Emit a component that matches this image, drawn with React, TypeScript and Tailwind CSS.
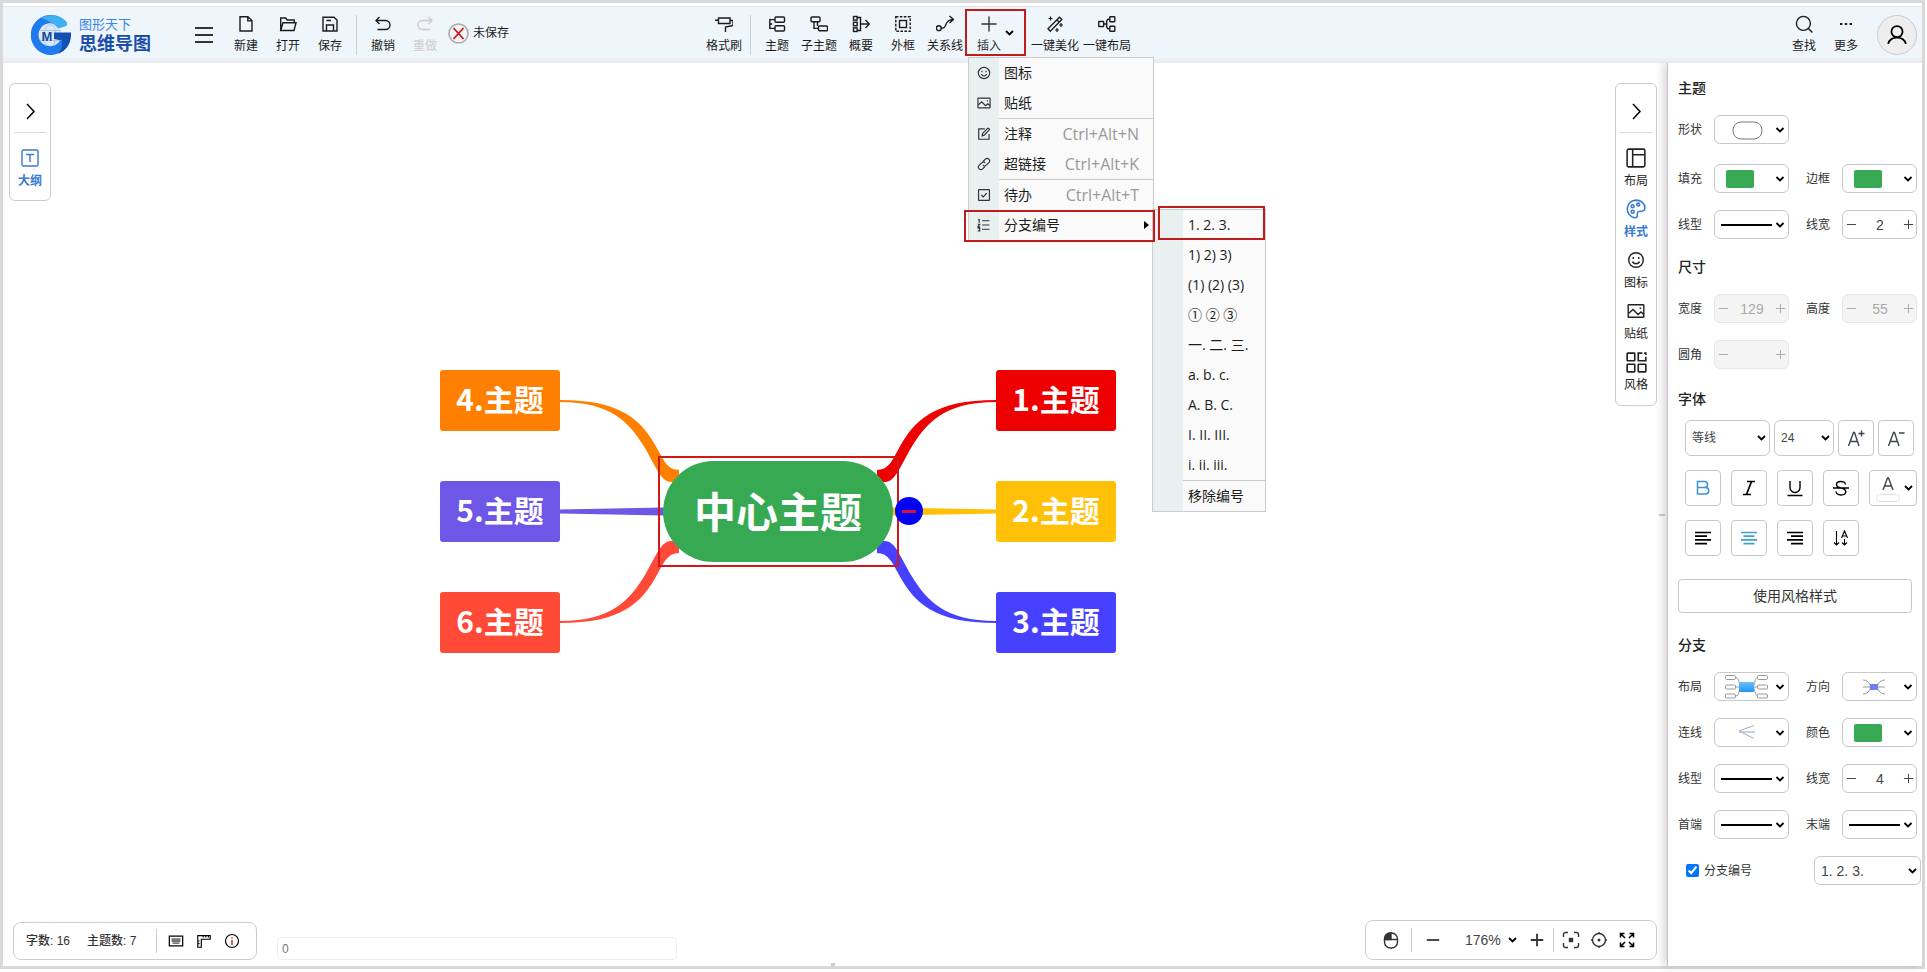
import React, { useState } from 'react';

interface IconProps {
  children: React.ReactNode;
  size?: number;
  stroke?: number;
}

function Icon({ children, size = 18, stroke = 1.4 }: IconProps) {
  return (
    <svg
      width={size}
      height={size}
      viewBox="0 0 18 18"
      fill="none"
      stroke="currentColor"
      strokeWidth={stroke}
      aria-hidden="true"
      className="shrink-0"
    >
      {children}
    </svg>
  );
}

function Chevron() {
  return (
    <svg width="9" height="6" viewBox="0 0 9 6" fill="none" stroke="#000" strokeWidth="1.8" aria-hidden="true">
      <path d="M1 1l3.5 3.5L8 1" />
    </svg>
  );
}

const icons = {
  file: <path d="M3 1.7h8l4 4V16H3zM10.8 1.7v4.2H15" />,
  open: <path d="M1.7 15.5V3h5l1.5 2h7v2.5M1.7 15.5L4 7.7h13l-2 7.8z" />,
  save: <path d="M2 2.2h11L16 5v11H2zM5.5 16v-6h7v6M5.5 5.5h4.5" />,
  undo: <path d="M5.5 2L2 5.5 5.5 9M2 5.5h9.5a4.2 4.2 0 0 1 0 9H3.5" />,
  redo: <path d="M12.5 2L16 5.5 12.5 9M16 5.5H6.5a4.2 4.2 0 0 0 0 9h8" />,
  brush: <path d="M3.5 3h11.5v5.5H3.5zM0 5.2h3.5M15 5.5h3v5l-7.5 1.5v5" />,
  topic: (
    <>
      <rect x="7" y="2" width="9.5" height="5.2" rx="1" />
      <rect x="7" y="10.8" width="9.5" height="5.2" rx="1" />
      <path d="M7 4.6H1.8v8.8H7M1.8 9h2.5" />
    </>
  ),
  subtopic: (
    <>
      <rect x="1" y="2" width="9" height="4.8" rx="1" />
      <rect x="8.5" y="11" width="9" height="4.8" rx="1" />
      <path d="M4 7v6.4h4.5M7.5 7v4" />
    </>
  ),
  summary: (
    <>
      <rect x="1.5" y="1.5" width="3.6" height="3.6" />
      <rect x="1.5" y="7.2" width="3.6" height="3.6" />
      <rect x="1.5" y="12.9" width="3.6" height="3.6" />
      <path d="M5 2.5h3.5v13H5M8.5 9H17M13.5 5l3.8 4-3.8 4" />
    </>
  ),
  frame: (
    <>
      <rect x="1.8" y="1.8" width="14.4" height="14.4" strokeDasharray="2.6 1.4" />
      <rect x="5.5" y="5.5" width="7" height="7" />
    </>
  ),
  relation: (
    <>
      <circle cx="2.8" cy="13.2" r="2.4" />
      <path d="M5 13c7 1.5 2-8 12-8.5M13.5 1l4 3.5-4 3.5" />
    </>
  ),
  plus: <path d="M9 1.5v15M1.5 9h15" />,
  magic: (
    <>
      <path d="M2 13.8L13.5 2.2l2.3 2.3L4.3 16.2zM11 5l2 2" />
      <path d="M4.5 1.5v4M2.5 3.5h4M15 8v4M13 10h4M11 13v4M9 15h4" strokeWidth="1.2" />
    </>
  ),
  arrange: (
    <>
      <rect x="0.7" y="6.5" width="5" height="5" rx="0.5" />
      <rect x="11.8" y="1.7" width="5" height="5" rx="0.5" />
      <rect x="11.8" y="11.3" width="5" height="5" rx="0.5" />
      <path d="M5.7 9h3M11.8 4.2H10L8.7 5.8v6.4L10 13.8h1.8" />
    </>
  ),
  search: (
    <>
      <circle cx="8.4" cy="8.4" r="7" />
      <path d="M13.4 13.4l4 4" />
    </>
  ),
  more: <path d="M3 9h2.4M7.8 9h2.4M12.6 9H15" strokeWidth="2.2" />,
  smile: (
    <>
      <circle cx="9" cy="9" r="7.3" />
      <path d="M5.5 10.5c1 3 6 3 7 0M6.3 6v2M11.7 6v2" />
    </>
  ),
  image: (
    <>
      <rect x="1.2" y="2.7" width="15.6" height="12.6" rx="0.5" />
      <path d="M1.5 11.5l4.5-4 5 5 3-2.5 2.8 2.5M12.6 6.2h1.5" />
    </>
  ),
  edit: <path d="M10 2.5H2.2v13.3h13.3V9M15.5 2.3l-1.7-.8-6.6 7-.6 3 2.8-1 6.6-7z" />,
  link: <path d="M8 5.5l3-3a3.2 3.2 0 0 1 4.5 4.5l-3.5 3.5a3.2 3.2 0 0 1-4.5 0M10 12.5l-3 3A3.2 3.2 0 0 1 2.5 11L6 7.5a3.2 3.2 0 0 1 4.5 0" />,
  check: (
    <>
      <rect x="2" y="2" width="14" height="14" rx="0.5" />
      <path d="M5.5 9l2.5 2.5 4.5-5" />
    </>
  ),
  list: <path d="M6.5 3.5H16M6.5 9H16M6.5 14.5H16M1.5 2h1.3v4M1 8h2.5L1 11.5h2.7M1 13h2.5v3.5H1" />,
  outline: (
    <>
      <rect x="1" y="1" width="16" height="16" rx="1.5" />
      <path d="M5 5.5h8M9 5.5V13" />
    </>
  ),
  layout: (
    <>
      <rect x="1" y="1" width="16" height="16" rx="1.5" />
      <path d="M6 1v16M6 6h11" />
    </>
  ),
  palette: (
    <>
      <path d="M9 1a8 8 0 0 0-2 15.7c3 .8 3.5-1 3.2-2.7-.3-2 .8-3 2.8-3 3 0 4-1 4-3C17 4 13.5 1 9 1z" />
      <circle cx="6" cy="6.5" r="1.3" />
      <circle cx="11" cy="5" r="1.3" />
      <circle cx="6" cy="11.5" r="1.3" />
    </>
  ),
  blocks: (
    <>
      <rect x="1" y="1" width="6.5" height="6.5" rx="0.5" />
      <rect x="1" y="10.5" width="6.5" height="6.5" rx="0.5" />
      <rect x="10.5" y="10.5" width="6.5" height="6.5" rx="0.5" />
      <path d="M14 1h-3.5v6.5H17V4M15.5 1H17v1.5" />
    </>
  ),
  user: (
    <>
      <circle cx="9" cy="6" r="5" />
      <path d="M1 17c2-7.5 14-7.5 16 0" />
    </>
  ),
  keyboard: (
    <>
      <rect x="1.5" y="3.5" width="15" height="11" />
      <path d="M4 7h10M4 9h10M5 11.5h8" stroke="#777" strokeWidth="2" />
    </>
  ),
  ruler: <path d="M2 3h14v4H6v9H2zM8 3v2M11 3v2M14 3v2M2 9h2M2 12h2" />,
  info: (
    <>
      <circle cx="9" cy="9" r="7.3" />
      <path d="M9 4.8v1.6M9 8v5.5" stroke="#c03030" strokeWidth="1.6" />
    </>
  ),
  mouse: (
    <>
      <rect x="2.5" y="2" width="13" height="15" rx="6" />
      <path d="M9 2v6.5H2.5C2.5 4 5 2 9 2z" fill="currentColor" />
      <path d="M2.5 8.5h13" />
    </>
  ),
  minus: <path d="M2 9h14" strokeWidth="2" />,
  zoomIn: <path d="M2 9h14M9 2v14" strokeWidth="2" />,
  focus: (
    <>
      <path d="M1.5 6V3.5a2 2 0 0 1 2-2H6M12 1.5h2.5a2 2 0 0 1 2 2V6M16.5 12v2.5a2 2 0 0 1-2 2H12M6 16.5H3.5a2 2 0 0 1-2-2V12" />
      <rect x="7.5" y="7.5" width="3" height="3" fill="currentColor" />
    </>
  ),
  target: (
    <>
      <circle cx="9" cy="9" r="6.5" />
      <path d="M9 1v2M9 15v2M1 9h2M15 9h2" />
      <circle cx="9" cy="9" r="0.8" fill="currentColor" />
    </>
  ),
  expand: <path d="M7 7L2.5 2.5M2.5 6.5v-4h4M11 7l4.5-4.5M11.5 2.5h4v4M7 11l-4.5 4.5M2.5 11.5v4h4M11 11l4.5 4.5M15.5 11.5v4h-4" />,
};

function Logo() {
  return (
    <svg width="40" height="40" viewBox="0 0 40 40" aria-hidden="true">
      <circle cx="19" cy="20.5" r="12" fill="#dbe9f7" />
      <g fill="none" stroke="#a9c9ec" strokeWidth="1">
        <ellipse cx="19" cy="20.5" rx="6" ry="11" />
        <path d="M8 15.5h22M8 25.5h22" />
      </g>
      <path d="M20 0A20 20 0 1 0 38 28L29 25.5A11.5 11.5 0 1 1 27 11.5L36 8A20 20 0 0 0 20 0z" fill="#1d7bee" />
      <path d="M10 3A20 20 0 0 1 35.5 7.5Q37 10 35 11L27.5 13.5Q21 6.5 10 3z" fill="#3fb0f2" />
      <path d="M23 17.5h17Q41 33 27 39Q33 31 30.5 25.5L23 24z" fill="#1450b4" />
      <text x="10.5" y="25.5" fontSize="13" fontWeight="700" fill="#174a9c" fontFamily="Liberation Sans, sans-serif">
        M
      </text>
    </svg>
  );
}

interface ToolProps {
  icon: React.ReactNode;
  label: string;
  wide?: boolean;
  disabled?: boolean;
}

function Tool({ icon, label, wide, disabled }: ToolProps) {
  return (
    <button
      type="button"
      disabled={disabled}
      className={`${wide ? 'w-[52px]' : 'w-[42px]'} ${disabled ? 'text-[#cccccc]' : 'text-[#1c1c1c]'} flex shrink-0 flex-col items-center gap-1 text-xs leading-[18px] whitespace-nowrap`}
    >
      <Icon>{icon}</Icon>
      {label}
    </button>
  );
}

const menuItems = [
  { icon: icons.smile, label: '图标', keys: '' },
  { icon: icons.image, label: '贴纸', keys: '' },
  { icon: icons.edit, label: '注释', keys: 'Ctrl+Alt+N', line: true },
  { icon: icons.link, label: '超链接', keys: 'Ctrl+Alt+K' },
  { icon: icons.check, label: '待办', keys: 'Ctrl+Alt+T', line: true },
];

const numbering = ['1. 2. 3.', '1) 2) 3)', '(1) (2) (3)', '① ② ③', '一. 二. 三.', 'a. b. c.', 'A. B. C.', 'I. II. III.', 'i. ii. iii.'];

function Marker({ className }: { className: string }) {
  return <span className={`pointer-events-none absolute border-2 border-[#c01c1c] ${className}`} />;
}

function InsertMenu() {
  return (
    <div
      role="menu"
      className="absolute top-[48px] left-[3px] z-20 w-[186px] border border-[#cccccc] bg-[#fafafa] font-['Open_Sans','Noto_Sans_CJK_SC',sans-serif] text-sm text-[#1c1c1c]"
    >
      {menuItems.map((item) => (
        <button key={item.label} type="button" role="menuitem" className="flex w-full">
          <span className="flex w-[30px] items-center justify-center bg-[#e8f0f0] text-[#333333]">
            <Icon size={14} stroke={1.5}>{item.icon}</Icon>
          </span>
          <span
            className={`${item.line ? 'h-[31px] border-t border-[#cccccc]' : 'h-[30px]'} flex flex-1 items-center justify-between pr-[14px] pl-[5px]`}
          >
            {item.label}
            <span className="text-base leading-5 text-[#999999]">{item.keys}</span>
          </span>
        </button>
      ))}
      <div className="relative">
        <button type="button" role="menuitem" aria-haspopup="menu" className="flex h-[30px] w-full items-center">
          <span className="flex h-full w-[30px] items-center justify-center bg-[#e8f0f0] text-[#333333]">
            <Icon size={14} stroke={1.5}>{icons.list}</Icon>
          </span>
          <span className="flex flex-1 items-center justify-between pr-1 pl-[5px]">
            分支编号
            <svg width="5" height="8" viewBox="0 0 5 8" aria-hidden="true">
              <path d="M0 0l5 4-5 4z" />
            </svg>
          </span>
        </button>
        <div role="menu" className="absolute -top-px left-[183px] w-[114px] border border-[#cccccc] bg-[#fafafa]">
          {numbering.map((text) => (
            <button key={text} type="button" role="menuitem" className="flex h-[30px] w-full items-center">
              <span className="h-full w-[30px] bg-[#e8f0f0]" />
              <span className="pl-[5px] whitespace-nowrap">{text}</span>
            </button>
          ))}
          <button type="button" role="menuitem" className="flex w-full">
            <span className="w-[30px] bg-[#e8f0f0]" />
            <span className="flex h-[31px] flex-1 items-center border-t border-[#cccccc] pl-[5px]">移除编号</span>
          </button>
          <Marker className="-top-1 left-[5px] h-[34px] w-[107px]" />
        </div>
        <Marker className="top-0 -left-[5px] h-8 w-[191px]" />
      </div>
    </div>
  );
}

function Header() {
  return (
    <header className="relative z-10 mt-[3px] flex h-[57px] shrink-0 items-center border-t border-[#dde3e6] bg-linear-to-b from-[#eef5fb] from-90% to-[#e6e9ed]">
      <div className="flex w-[700px] shrink-0 items-center pl-7">
        <Logo />
        <div className="ml-2">
          <div className="text-[13px] leading-[18px] text-[#3c87e6]">图形天下</div>
          <div className="text-lg leading-5 font-bold text-[#1a4fa8]">思维导图</div>
        </div>
        <button type="button" aria-label="菜单" className="ml-11 flex flex-col gap-[5px]">
          <span className="h-0.5 w-[18px] bg-[#333333]" />
          <span className="h-0.5 w-[18px] bg-[#333333]" />
          <span className="h-0.5 w-[18px] bg-[#333333]" />
        </button>
        <div className="ml-3 flex">
          <Tool icon={icons.file} label="新建" />
          <Tool icon={icons.open} label="打开" />
          <Tool icon={icons.save} label="保存" />
        </div>
        <span className="mx-[5px] h-10 w-px bg-[#c8d2da]" />
        <Tool icon={icons.undo} label="撤销" />
        <Tool icon={icons.redo} label="重做" disabled />
        <div className="ml-0.5 flex items-center gap-1 pb-1 text-xs text-[#1c1c1c]">
          <svg width="21" height="21" viewBox="0 0 21 21" fill="none" aria-hidden="true">
            <circle cx="10.5" cy="10.5" r="9.5" fill="#f4f4f4" stroke="#aaaaaa" strokeWidth="1.6" />
            <path d="M5.5 5l10 11M15.5 5l-10 11" stroke="#cc1818" strokeWidth="1.8" />
          </svg>
          未保存
        </div>
      </div>
      <nav className="flex items-start">
        <Tool icon={icons.brush} label="格式刷" />
        <span className="mx-[5px] h-10 w-px bg-[#c8d2da]" />
        <Tool icon={icons.topic} label="主题" />
        <Tool icon={icons.subtopic} label="子主题" />
        <Tool icon={icons.summary} label="概要" />
        <Tool icon={icons.frame} label="外框" />
        <Tool icon={icons.relation} label="关系线" />
        <div className="relative -mt-1.5 -mb-px -ml-px flex h-[47px] w-[61px] shrink-0 items-center justify-center gap-1">
          <button type="button" aria-haspopup="menu" className="flex w-6 flex-col items-center gap-1 pt-[5px] text-xs leading-[18px] whitespace-nowrap text-[#333333]">
            <Icon>{icons.plus}</Icon>
            插入
          </button>
          <Chevron />
          <InsertMenu />
          <Marker className="inset-0" />
        </div>
        <div className="ml-[3px] flex">
          <Tool icon={icons.magic} label="一键美化" wide />
          <Tool icon={icons.arrange} label="一键布局" wide />
        </div>
      </nav>
      <div className="ml-auto flex items-center pr-[5px]">
        <Tool icon={icons.search} label="查找" />
        <Tool icon={icons.more} label="更多" />
        <button
          type="button"
          aria-label="用户"
          className="ml-[10px] flex size-10 items-center justify-center rounded-full border border-[#cccccc] bg-[#eeeeee] text-black"
        >
          <Icon size={20} stroke={1.6}>{icons.user}</Icon>
        </button>
      </div>
    </header>
  );
}

// tapers from the central node out to a topic
const branch = 'M437 100 C448 100 452 91 458 80 C474 50 494 30 556 30 V32 C505 32 487 52 471 78 C460 97 455 112 445 112 H437 Z';

const nodes = [
  { text: '1.主题', className: 'left-[556px] top-0 bg-[#ee0000]' },
  { text: '2.主题', className: 'left-[556px] top-[111px] bg-[#ffc107]' },
  { text: '3.主题', className: 'left-[556px] top-[222px] bg-[#4640ff]' },
  { text: '4.主题', className: 'left-0 top-0 bg-[#ff8000]' },
  { text: '5.主题', className: 'left-0 top-[111px] bg-[#6e56e6]' },
  { text: '6.主题', className: 'left-0 top-[222px] bg-[#ff4a38]' },
];

function MindMap() {
  return (
    <div className="absolute top-[307px] left-[437px] h-[283px] w-[676px] font-['Noto_Sans_CJK_SC',sans-serif] font-bold text-white">
      <svg width="676" height="283" viewBox="0 0 676 283" className="absolute inset-0" aria-hidden="true">
        <path d={branch} fill="#ee0000" />
        <path d={branch} fill="#4640ff" transform="translate(0 283) scale(1 -1)" />
        <path d={branch} fill="#ff8000" transform="translate(676 0) scale(-1 1)" />
        <path d={branch} fill="#ff4a38" transform="translate(676 283) scale(-1 -1)" />
        <path d="M120 139.5L224 137.5v8l-104-2z" fill="#6e56e6" />
        <path d="M452 137.5l104 2v4l-104 2z" fill="#ffc107" />
      </svg>
      {nodes.map((node) => (
        <div
          key={node.text}
          className={`absolute flex h-[61px] w-[120px] items-center justify-center rounded-[3px] pb-1 text-[30px] whitespace-nowrap ${node.className}`}
        >
          {node.text}
        </div>
      ))}
      <div className="absolute top-[91px] left-[223px] flex h-[101px] w-[230px] items-center justify-center rounded-full bg-[#38a953] pb-1 text-[42px] whitespace-nowrap">
        中心主题
      </div>
      <span className="pointer-events-none absolute top-[86px] left-[218px] h-[111px] w-[241px] border-2 border-[#d01818]" />
      <button
        type="button"
        aria-label="收起"
        className="absolute top-[127px] left-[455px] flex size-7 items-center justify-center rounded-full bg-[#0000f5]"
      >
        <span className="h-[3px] w-[14px] bg-[#d8103c]" />
      </button>
    </div>
  );
}

const sideTabs = [
  { icon: icons.layout, label: '布局', size: 20 },
  { icon: icons.palette, label: '样式', size: 20, active: true },
  { icon: icons.smile, label: '图标', size: 18 },
  { icon: icons.image, label: '贴纸', size: 18 },
  { icon: icons.blocks, label: '风格', size: 21 },
];

function Fold() {
  return (
    <button type="button" aria-label="折叠" className="mx-1 flex h-[49px] items-center justify-center border-b border-[#cfe0da] pt-1.5">
      <svg width="9" height="17" viewBox="0 0 9 17" fill="none" stroke="#000" strokeWidth="1.5" aria-hidden="true">
        <path d="M1 1l7 7.5L1 16" />
      </svg>
    </button>
  );
}

function Canvas() {
  return (
    <main className="relative flex min-w-0 flex-1 flex-col justify-between">
      <MindMap />
      <div className="flex items-start justify-between pt-5 pr-[10px] pl-1.5">
        <div className="relative flex h-[118px] w-[42px] flex-col rounded-md border border-[#cccccc] bg-white">
          <Fold />
          <button type="button" className="flex flex-col items-center gap-1 pt-4 text-xs leading-5 font-bold text-[#3a7ad0]">
            <Icon>{icons.outline}</Icon>
            大纲
          </button>
        </div>
        <div className="relative flex w-[42px] flex-col rounded-md border border-[#cccccc] bg-white pb-[7px]">
          <Fold />
          <div className="flex flex-col pt-[10px]">
            {sideTabs.map((tab) => (
              <button
                key={tab.label}
                type="button"
                className={`${tab.active ? 'font-bold text-[#3a7ad0]' : 'text-[#222222]'} flex h-[51px] flex-col items-center text-xs leading-4`}
              >
                <span className="flex h-[30px] items-center">
                  <Icon size={tab.size}>{tab.icon}</Icon>
                </span>
                {tab.label}
              </button>
            ))}
          </div>
        </div>
      </div>

      <div className="relative flex items-end pr-[10px] pb-1.5 pl-[10px]">
        <div className="flex h-[38px] w-[244px] shrink-0 items-center rounded-lg border border-[#cccccc] bg-white pl-3 text-xs font-medium text-[#333333]">
          <span className="w-[61px]">字数: 16</span>
          <span className="w-[69px]">主题数: 7</span>
          <span className="mr-[11px] h-6 w-px bg-[#c5d0cd]" />
          <div className="flex gap-[12px] text-black">
            <button type="button" aria-label="键盘"><Icon size={16}>{icons.keyboard}</Icon></button>
            <button type="button" aria-label="标尺"><Icon size={16} stroke={1.3}>{icons.ruler}</Icon></button>
            <button type="button" aria-label="信息"><Icon size={16} stroke={1.3}>{icons.info}</Icon></button>
          </div>
        </div>
        <input
          aria-label="备注"
          defaultValue="0"
          className="ml-5 h-[23px] w-[400px] rounded border border-[#eeeeee] bg-white px-1 text-xs text-[#777777]"
        />
        <div className="ml-auto flex h-10 w-[292px] items-center rounded-lg border border-[#cccccc] bg-white pl-4 text-[#333333]">
          <button type="button" aria-label="鼠标"><Icon>{icons.mouse}</Icon></button>
          <span className="mx-[11px] h-6 w-px bg-[#c5d0cd]" />
          <button type="button" aria-label="缩小" className="ml-0.5"><Icon size={16}>{icons.minus}</Icon></button>
          <div className="relative ml-6">
            <select aria-label="缩放" className="w-[52px] appearance-none text-sm text-[#444444]">
              <option>176%</option>
            </select>
            <span className="pointer-events-none absolute inset-y-0 right-0 flex items-center"><Chevron /></span>
          </div>
          <button type="button" aria-label="放大" className="ml-3"><Icon size={16}>{icons.zoomIn}</Icon></button>
          <span className="mx-2 h-6 w-px bg-[#c5d0cd]" />
          <div className="flex gap-[10px]">
            <button type="button" aria-label="聚焦"><Icon>{icons.focus}</Icon></button>
            <button type="button" aria-label="居中"><Icon>{icons.target}</Icon></button>
            <button type="button" aria-label="全屏" className="text-black"><Icon size={18} stroke={1.5}>{icons.expand}</Icon></button>
          </div>
        </div>
      </div>
      <span className="absolute top-[451px] right-0.5 h-0.5 w-1.5 bg-[#cccccc]" />
      <span className="absolute bottom-0 left-1/2 -ml-1 h-[3px] w-1 bg-[#cccccc]" />
    </main>
  );
}

const previews = {
  shape: <rect x="19" y="7" width="29" height="17" rx="8" fill="none" stroke="#777777" />,
  swatch: <rect x="12" y="6" width="28" height="18" rx="2" fill="#38a953" />,
  line: <path d="M7 15h51" stroke="#000" strokeWidth="2" />,
  layout: (
    <>
      <g fill="none" stroke="#999999">
        <path d="M22 5.5c4 1 2 5 5 9M22 24c4-1 2-5 5-9M22 15h22M44 5.5c-4 1-2 5-5 9M44 24c-4-1-2-5-5-9" />
        <rect x="11.5" y="3.5" width="10" height="4" rx="1" fill="#fff" />
        <rect x="11.5" y="13" width="10" height="4" rx="1" fill="#fff" />
        <rect x="11.5" y="22" width="10" height="4" rx="1" fill="#fff" />
        <rect x="43.5" y="3.5" width="10" height="4" rx="1" fill="#fff" />
        <rect x="43.5" y="13" width="10" height="4" rx="1" fill="#fff" />
        <rect x="43.5" y="22" width="10" height="4" rx="1" fill="#fff" />
      </g>
      <linearGradient id="sky" x1="0" y1="0" x2="0" y2="1">
        <stop stopColor="#6cc0f8" />
        <stop offset="1" stopColor="#2196f3" />
      </linearGradient>
      <rect x="25" y="10" width="15" height="10" rx="1" fill="url(#sky)" />
    </>
  ),
  direction: (
    <>
      <path d="M21 8q6 0 8 7-2 7-8 7M43 8q-6 0-8 7 2 7 8 7M21 15h22" fill="none" stroke="#999999" />
      <rect x="28" y="12" width="8" height="6" fill="#6f7ff0" />
    </>
  ),
  connect: (
    <>
      <path d="M40 7.5L25 13l15 7.5" fill="none" stroke="#aaaaaa" />
      <path d="M25 14h16" stroke="#a9c8e6" strokeWidth="1.5" />
    </>
  ),
};

interface FieldProps {
  id: string;
  label: string;
  preview: keyof typeof previews;
}

function PickField({ id, label, preview }: FieldProps) {
  return (
    <div className="flex items-center">
      <label htmlFor={id} className="w-9 text-xs text-[#333333]">{label}</label>
      <div className="relative h-[29px] w-[75px]">
        <select id={id} className="size-full appearance-none rounded-md border border-[#c8c8c8] bg-white">
          <option value={preview}></option>
        </select>
        <svg viewBox="0 0 75 29" className="pointer-events-none absolute inset-0 size-full" aria-hidden="true">
          {previews[preview]}
          <path d="M62.5 13l3.5 3.5 3.5-3.5" fill="none" stroke="#000" strokeWidth="1.8" />
        </svg>
      </div>
    </div>
  );
}

function StepField({ id, label, value, disabled }: { id: string; label: string; value: string; disabled?: boolean }) {
  const [current, setCurrent] = useState(value);
  const step = (by: number) => setCurrent(String(Number(current) + by));

  return (
    <div className="flex items-center">
      <label htmlFor={id} className="w-9 text-xs text-[#333333]">{label}</label>
      <div
        className={`${disabled ? 'border-[#e6e6e6] bg-[#f4f4f4] text-[#aaaaaa]' : 'border-[#c8c8c8] bg-white text-[#444444]'} flex h-[29px] w-[75px] items-center justify-between rounded-md border pr-0.5 pl-[3px]`}
      >
        <button type="button" disabled={disabled} aria-label={`减少${label}`} onClick={() => step(-1)}>
          <Icon size={11} stroke={1.6}><path d="M1.5 9h15" /></Icon>
        </button>
        <input
          id={id}
          value={current}
          disabled={disabled}
          onChange={(e) => setCurrent(e.target.value)}
          className="w-9 text-center text-sm"
        />
        <button type="button" disabled={disabled} aria-label={`增加${label}`} onClick={() => step(1)}>
          <Icon size={11} stroke={1.6}><path d="M1.5 9h15M9 1.5v15" /></Icon>
        </button>
      </div>
    </div>
  );
}

function TextSelect({ label, value, className }: { label: string; value: string; className: string }) {
  return (
    <div className={`relative ${className}`}>
      <select aria-label={label} className="size-full appearance-none rounded-md border border-[#c8c8c8] bg-white px-1.5 text-[#444444]">
        <option>{value}</option>
      </select>
      <span className="pointer-events-none absolute inset-y-0 right-1 flex items-center"><Chevron /></span>
    </div>
  );
}

function Square({ label, children }: { label: string; children: React.ReactNode }) {
  return (
    <button
      type="button"
      aria-label={label}
      className="flex size-9 items-center justify-center rounded border border-[#c8c8c8] bg-white text-black"
    >
      <Icon>{children}</Icon>
    </button>
  );
}

function Title({ children }: { children: React.ReactNode }) {
  return <h2 className="text-sm leading-5 font-medium text-[#222222]">{children}</h2>;
}

function StylePanel() {
  return (
    <aside className="relative w-[255px] shrink-0 border-l border-[#c9c2c4] bg-white pt-[15px] pl-[10px] shadow-[-4px_0_8px_rgba(60,40,45,0.18)]">
      <Title>主题</Title>
      <div className="mt-[17px] flex gap-[17px]">
        <PickField id="shape" label="形状" preview="shape" />
      </div>
      <div className="mt-5 flex gap-[17px]">
        <PickField id="fill" label="填充" preview="swatch" />
        <PickField id="border" label="边框" preview="swatch" />
      </div>
      <div className="mt-[17px] flex gap-[17px]">
        <PickField id="line" label="线型" preview="line" />
        <StepField id="line-width" label="线宽" value="2" />
      </div>

      <div className="mt-[18px]"><Title>尺寸</Title></div>
      <div className="mt-[17px] flex gap-[17px]">
        <StepField id="width" label="宽度" value="129" disabled />
        <StepField id="height" label="高度" value="55" disabled />
      </div>
      <div className="mt-[17px] flex">
        <StepField id="radius" label="圆角" value="" disabled />
      </div>

      <div className="mt-5"><Title>字体</Title></div>
      <div className="mt-[11px] ml-[7px] flex gap-1 text-xs">
        <TextSelect label="字体名称" value="等线" className="h-9 w-[85px]" />
        <TextSelect label="字号" value="24" className="h-9 w-[60px]" />
        <Square label="增大字号"><path d="M1.5 17L6.5 3.5h1L12 17M3.3 12.5h7.2M11.5 4.5h6M14.5 1.5v6" stroke="#3c4650" /></Square>
        <Square label="减小字号"><path d="M1.5 17L6.5 3.5h1L12 17M3.3 12.5h7.2M12 4h5.5" stroke="#3c4650" /></Square>
      </div>
      <div className="mt-[14px] ml-[7px] flex gap-[10px]">
        <Square label="加粗"><path d="M3.5 2.5h7a3 3 0 0 1 0 6h-7zM3.5 8.5h8a3.2 3.2 0 0 1 0 6.5h-8z" stroke="#3f92d2" strokeWidth="1.5" /></Square>
        <Square label="斜体"><path d="M7 2.5h8M3 15.5h8M11.5 2.5l-5 13" strokeWidth="1.7" /></Square>
        <Square label="下划线"><path d="M4 2v6.5a5 5 0 0 0 10 0V2M1.5 16.5h15" /></Square>
        <Square label="删除线"><path d="M13.5 5.5C13 1.5 4.5 1.5 4.5 5.5c0 2 2 3 4.5 3.5 3.5.8 5 2 4.8 4-.5 4-9.300 4-9.800-.5M1 9h16" /></Square>
        <button type="button" aria-label="字体颜色" className="flex h-9 w-12 items-center gap-1 rounded border border-[#c8c8c8] pl-1.5">
          <svg width="24" height="30" viewBox="0 0 24 30" fill="none" aria-hidden="true">
            <path d="M7 17L11.5 5h1L17 17M8.5 13h7" stroke="#3c4650" strokeWidth="1.4" />
            <rect x="0.5" y="21.5" width="23" height="7" rx="3" stroke="#dddddd" />
          </svg>
          <Chevron />
        </button>
      </div>
      <div className="mt-[14px] ml-[7px] flex gap-[10px]">
        <Square label="左对齐"><path d="M1 3.5h16M1 7.2h12M1 10.9h16M1 14.6h12" strokeWidth="1.7" /></Square>
        <Square label="居中对齐"><path d="M1 3.5h16M3.5 7.2h11M1 10.9h16M3.5 14.6h11" stroke="#3fa0cc" strokeWidth="1.7" /></Square>
        <Square label="右对齐"><path d="M1 3.5h16M5 7.2h12M1 10.9h16M5 14.6h12" strokeWidth="1.7" /></Square>
        <Square label="文字方向"><path d="M4.500 2v14M2 13.500l2.500 2.500L7 13.500M9.500 9L12.500 2l3 7M10.500 7h4M12.500 10v6M10 13.500l2.500 2.500 2.500-2.500" strokeWidth="1.1" /></Square>
      </div>
      <button type="button" className="mt-[23px] h-[34px] w-[234px] rounded border border-[#c8c8c8] text-sm text-[#333333]">
        使用风格样式
      </button>

      <div className="mt-[22px]"><Title>分支</Title></div>
      <div className="mt-[17px] grid gap-[17px]">
        <div className="flex gap-[17px]">
          <PickField id="branch-layout" label="布局" preview="layout" />
          <PickField id="direction" label="方向" preview="direction" />
        </div>
        <div className="flex gap-[17px]">
          <PickField id="connect" label="连线" preview="connect" />
          <PickField id="color" label="颜色" preview="swatch" />
        </div>
        <div className="flex gap-[17px]">
          <PickField id="branch-line" label="线型" preview="line" />
          <StepField id="branch-width" label="线宽" value="4" />
        </div>
        <div className="flex gap-[17px]">
          <PickField id="start" label="首端" preview="line" />
          <PickField id="end" label="末端" preview="line" />
        </div>
        <div className="flex items-center justify-between pr-px pl-2">
          <label className="flex items-center gap-[5px] text-xs text-[#333333]">
            <input type="checkbox" defaultChecked className="size-[13px] accent-[#0075ff]" />
            分支编号
          </label>
          <TextSelect label="编号样式" value="1. 2. 3." className="h-[29px] w-[107px] text-sm" />
        </div>
      </div>
    </aside>
  );
}

export default function App() {
  return (
    <div className="flex min-h-screen bg-white pr-0.5 pb-[3px] font-['Liberation_Sans','Noto_Sans_CJK_SC',sans-serif]">
      <div className="flex min-w-0 flex-1 flex-col border-[3px] border-[#d9d9d9]">
        <Header />
        <div className="flex flex-1">
          <Canvas />
          <StylePanel />
        </div>
      </div>
    </div>
  );
}
